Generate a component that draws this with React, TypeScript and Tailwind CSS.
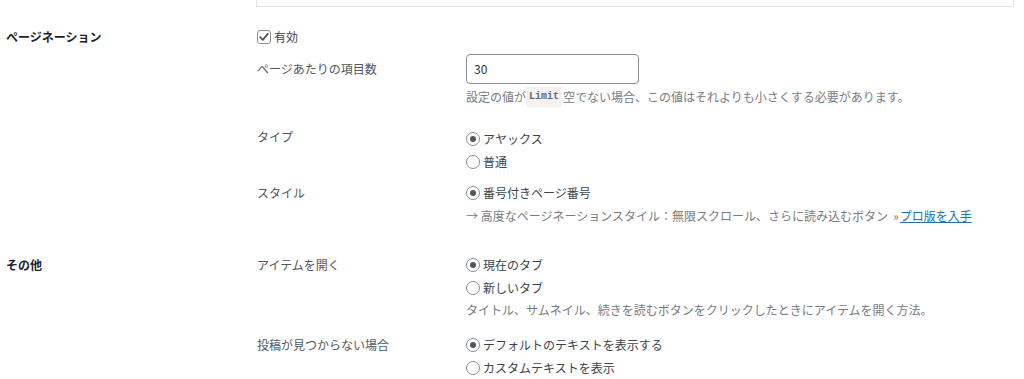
import React from 'react';

const Radio: React.FC<{ checked?: boolean; label: string }> = ({ checked, label }) => (
  <div className="flex items-center h-[23px]">
    <span className="w-[14px] h-[14px] rounded-full border border-[#8c8f94] bg-white flex items-center justify-center shrink-0">
      {checked && <span className="w-[6px] h-[6px] rounded-full bg-[#50575e]" />}
    </span>
    <span className="ml-[3px] text-[#3c434a]">{label}</span>
  </div>
);

const App: React.FC = () => {
  return (
    <div
      className="w-[1024px] h-[379px] bg-white overflow-hidden text-[12px] leading-[20px] text-[#50575e]"
      style={{ fontFamily: '"Noto Sans CJK JP", "Noto Sans", sans-serif' }}
    >
      {/* bottom edge of the previous box */}
      <div className="ml-[256px] mr-[10px] h-[7px] border-x border-b border-[#e4e4e7]" />

      {/* Pagination */}
      <div className="grid grid-cols-[251px_209px_1fr] pl-[6px] mt-[20px]">
        <div className="font-bold text-[#1d2327] leading-[20px]">ページネーション</div>
        <div className="col-span-2">
          <div className="flex items-center h-[20px]">
            <span className="w-[14px] h-[14px] rounded-[3px] border border-[#8c8f94] bg-white flex items-center justify-center">
              <svg width="12" height="12" viewBox="0 0 12 12">
                <path d="M2.2 6.2 L4.8 8.8 L9.8 2.8" fill="none" stroke="#50575e" strokeWidth="1.8" strokeLinecap="round" strokeLinejoin="round" />
              </svg>
            </span>
            <span className="ml-[3px] text-[#3c434a]">有効</span>
          </div>

          <div className="grid grid-cols-[209px_1fr] mt-[7px]">
            <div className="flex items-center h-[30px]">ページあたりの項目数</div>
            <div>
              <div className="w-[173px] h-[30px] border border-[#8c8f94] rounded-[4px] px-[7px] flex items-center text-[#2c3338]">30</div>
              <div className="mt-[3px] text-[#787c82] flex items-center">
                設定の値が
                <code
                  className="ml-0 mr-[1px] px-[3px] bg-[#f6f1f1] text-[10px] font-semibold text-[#646970]"
                  style={{ fontFamily: '"Liberation Mono", "DejaVu Sans Mono", monospace' }}
                >
                  Limit
                </code>
                空でない場合、この値はそれよりも小さくする必要があります。
              </div>
            </div>
          </div>

          <div className="grid grid-cols-[209px_1fr] mt-[20px]">
            <div className="h-[23px] flex items-center -mt-[2px]">タイプ</div>
            <div>
              <Radio checked label="アヤックス" />
              <Radio label="普通" />
            </div>
          </div>

          <div className="grid grid-cols-[209px_1fr] mt-[8px]">
            <div className="h-[23px] flex items-center">スタイル</div>
            <div>
              <Radio checked label="番号付きページ番号" />
              <div className="h-[23px] flex items-center text-[#787c82]">
                → 高度なページネーションスタイル：無限スクロール、さらに読み込むボタン
                <span className="ml-[5px]">»</span>
                <a className="text-[#2271b1] underline ml-[1px]">プロ版を入手</a>
              </div>
            </div>
          </div>
        </div>
      </div>

      {/* Other */}
      <div className="grid grid-cols-[251px_209px_1fr] pl-[6px] mt-[26px]">
        <div className="font-bold text-[#1d2327] h-[23px] flex items-center">その他</div>
        <div className="col-span-2">
          <div className="grid grid-cols-[209px_1fr]">
            <div className="h-[23px] flex items-center">アイテムを開く</div>
            <div>
              <Radio checked label="現在のタブ" />
              <Radio label="新しいタブ" />
              <div className="h-[22px] flex items-center text-[#787c82]">
                タイトル、サムネイル、続きを読むボタンをクリックしたときにアイテムを開く方法。
              </div>
            </div>
          </div>

          <div className="grid grid-cols-[209px_1fr] mt-[12px]">
            <div className="h-[23px] flex items-center">投稿が見つからない場合</div>
            <div>
              <Radio checked label="デフォルトのテキストを表示する" />
              <Radio label="カスタムテキストを表示" />
            </div>
          </div>
        </div>
      </div>
    </div>
  );
};

export default App;
